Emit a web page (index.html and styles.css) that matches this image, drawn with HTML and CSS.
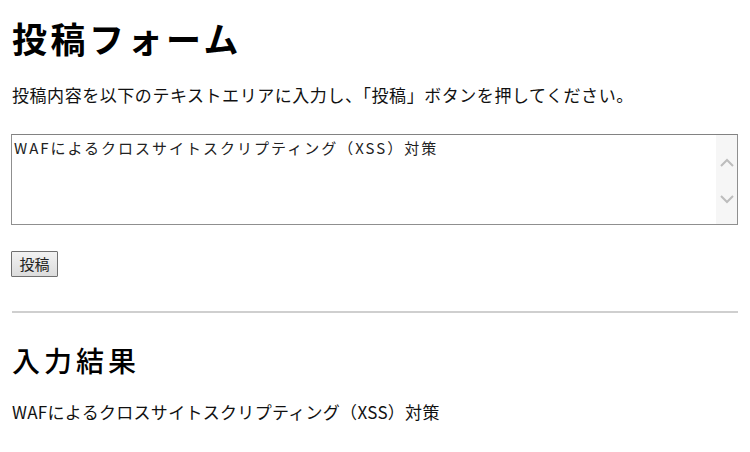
FILE: index.html
```html
<!DOCTYPE html>
<html lang="ja">
<head>
<meta charset="utf-8">
<title>投稿フォーム</title>
<link rel="stylesheet" href="styles.css">
</head>
<body>
<h1 class="title">投稿フォーム</h1>
<p class="lead">投稿内容を以下のテキストエリアに入力し、「投稿」ボタンを押してください。</p>
<form class="form">
  <div class="area">
    <textarea class="area-input">WAFによるクロスサイトスクリプティング（XSS）対策</textarea>
    <div class="scroll">
      <svg width="14" height="9" viewBox="0 0 14 9"><path d="M1 8 L7 2 L13 8" fill="none" stroke="#bdbdbd" stroke-width="2"/></svg>
      <svg width="14" height="9" viewBox="0 0 14 9"><path d="M1 1 L7 7 L13 1" fill="none" stroke="#bdbdbd" stroke-width="2"/></svg>
    </div>
  </div>
  <button type="button" class="btn">投稿</button>
</form>
<hr class="rule">
<h2 class="sub">入力結果</h2>
<p class="result">WAFによるクロスサイトスクリプティング（XSS）対策</p>
</body>
</html>
```
FILE: styles.css
```css
html, body {
  margin: 0;
  padding: 0;
  background: #fff;
}
body {
  padding: 14px 12px 0 11px;
  font-family: "Noto Sans CJK JP", "Noto Sans", sans-serif;
  color: #000;
}
.title {
  margin: 0 0 0 1px;
  font-size: 35px;
  line-height: 48px;
  font-weight: 700;
  letter-spacing: 3.5px;
}
.lead {
  margin: 21px 0 0 1px;
  font-size: 17px;
  line-height: 24px;
  letter-spacing: 0.55px;
  color: #111;
}
.form {
  margin: 27px 0 0 0;
}
.area {
  display: flex;
  width: 727px;
  height: 91px;
  box-sizing: border-box;
  border: 1px solid #8f8f8f;
  border-top-color: #828282;
  background: #fff;
}
.area-input {
  flex: 1;
  border: 0;
  margin: 0;
  padding: 3px 2px;
  resize: none;
  outline: none;
  overflow: hidden;
  font-family: "Noto Sans CJK JP", monospace;
  font-size: 15px;
  line-height: 20px;
  letter-spacing: 2px;
  color: #222;
  background: transparent;
}
.scroll {
  width: 21px;
  background: #f6f6f6;
  display: flex;
  flex-direction: column;
  justify-content: center;
  align-items: center;
  gap: 28px;
  padding-top: 2px;
}
.btn {
  display: block;
  width: 47px;
  height: 26px;
  margin: 26px 0 0 0;
  padding: 0;
  border: 1px solid #707070;
  border-radius: 1px;
  background: linear-gradient(#f2f2f2, #dcdcdc);
  font-family: "Noto Sans CJK JP", sans-serif;
  font-size: 15px;
  line-height: 22px;
  color: #222;
}
.rule {
  margin: 34px 0 0 1px;
  border: 0;
  height: 2px;
  background: #cfcfcf;
}
.sub {
  margin: 27px 0 0 1px;
  font-size: 28px;
  line-height: 40px;
  font-weight: 500;
  letter-spacing: 4px;
}
.result {
  margin: 20px 0 0 1px;
  font-size: 17px;
  line-height: 24px;
  letter-spacing: 0.3px;
  color: #111;
}
```
